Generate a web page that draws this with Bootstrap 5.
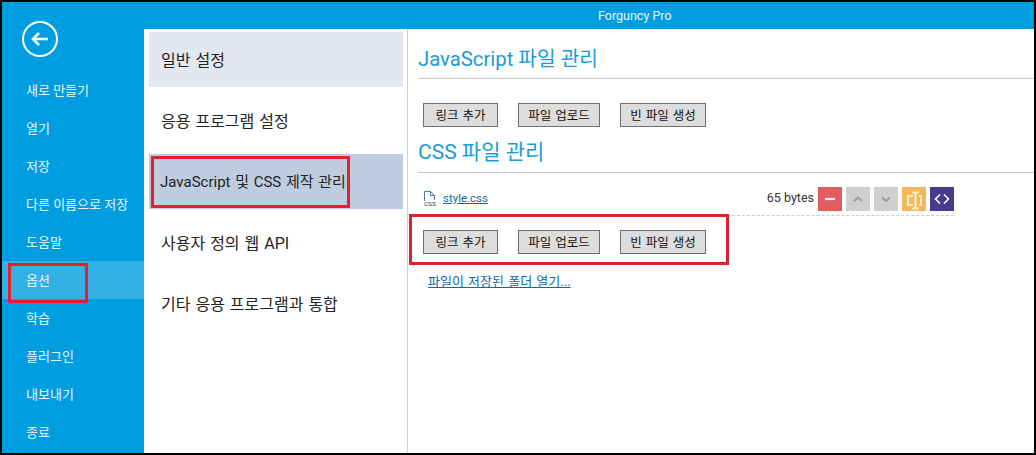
<!DOCTYPE html>
<html lang="ko">
<head>
<meta charset="utf-8">
<title>Forguncy Pro</title>
<link href="https://cdn.jsdelivr.net/npm/bootstrap@5.3.0/dist/css/bootstrap.min.css" rel="stylesheet">
<style>
html,body{margin:0;height:455px;overflow:hidden;background:#000}
body{font-family:Roboto,"Noto Sans CJK KR",sans-serif;color:#222}
.shell{position:relative;width:1036px;height:455px;border:2px solid #000;background:#fff}
.side{width:142px;background:#009ee0;color:#fff;flex:none}
.backbtn{width:36px;height:36px;margin:19px 0 14px 20px;border:2px solid #fff;border-radius:50%;background:none;padding:0;display:flex;align-items:center;justify-content:center}
.sideitem{display:block;height:38px;line-height:40px;padding-left:24px;font-size:13px;color:#e8f6fc;text-decoration:none;white-space:nowrap}
.sideitem.on{background:#33b1e6}
.titlebar{height:27px;line-height:27px;background:#009ee0;color:#e8f6fc;font-size:12.5px;padding-left:454px;flex:none}
.mid{width:264px;flex:none;border-right:1px solid #d0d0d0;padding:3px 4px 0 5px}
.miditem{display:flex;align-items:center;height:55px;padding:2px 0 0 12px;font-size:16px;color:#222;margin-bottom:6px;text-decoration:none;white-space:nowrap;word-spacing:1px}
.miditem.first{background:#e3e8f0}
.miditem.sel{background:#bfcce0;padding-left:11px;font-size:15px}
.pane{padding:0 0 0 10px;min-width:0}
.hd{line-height:28px;color:#1a9bd7;border-bottom:1px solid #c8c8c8;margin:0;font-weight:400}
.hd1{height:50px;padding-top:16px;font-size:20.300px}
.hd2{height:46px;padding-top:11px;font-size:21px}
.btnrow{display:flex;gap:20px;padding-left:5px}
.btnrow1{margin-top:24px}
.btnrow2{margin-top:14px}
.flatbtn{height:24px;padding:0;border:1px solid #707070;border-radius:0;background:#dddddd;color:#111;font-size:12.5px;line-height:21px;text-align:center;word-spacing:1px}
.w1{width:75px}.w2{width:82px}.w3{width:86px}
.filerow{width:531px;margin-left:5px;height:43px;padding-top:9px;border-bottom:1px dashed #ccc;display:flex;align-items:center;font-size:12.5px}
.filelink{color:#0d6aa8;text-decoration:underline;margin-left:4px;font-size:11.500px}
.size{margin-left:auto;margin-right:4px;color:#333}
.act{width:24px;height:24px;margin-left:4px;display:flex;align-items:center;justify-content:center;flex:none}
.act.first{margin-left:0}
.redact{background:#e05c5f}.grayact{background:#cfcfcf}.ambact{background:#f5b75b}.purpact{background:#4a3a8c}
.folderlink{display:block;margin:20px 0 0 10px;font-size:13px;color:#0d6aa8;text-decoration:underline;word-spacing:1px;line-height:16px}
.redbox{position:absolute;border:3px solid #e0222e;pointer-events:none}
.r1{left:149px;top:154px;width:199px;height:52px}
.r2{left:6px;top:261px;width:80px;height:40px}
.r3{left:407px;top:212px;width:320px;height:51px}
</style>
</head>
<body>
<div class="shell d-flex">
  <nav class="side d-flex flex-column">
    <button class="backbtn" aria-label="back"><svg width="18" height="14" viewBox="0 0 18 14"><path d="M8 1 2 7l6 6M3 7h14" fill="none" stroke="#fff" stroke-width="2.600"/></svg></button>
    <a class="sideitem" href="#">새로 만들기</a>
    <a class="sideitem" href="#">열기</a>
    <a class="sideitem" href="#">저장</a>
    <a class="sideitem" href="#">다른 이름으로 저장</a>
    <a class="sideitem" href="#">도움말</a>
    <a class="sideitem on" href="#">옵션</a>
    <a class="sideitem" href="#">학습</a>
    <a class="sideitem" href="#">플러그인</a>
    <a class="sideitem" href="#">내보내기</a>
    <a class="sideitem" href="#">종료</a>
  </nav>
  <div class="flex-grow-1 d-flex flex-column" style="min-width:0">
    <div class="titlebar">Forguncy Pro</div>
    <div class="d-flex flex-grow-1">
      <div class="mid">
        <a class="miditem first" href="#">일반 설정</a>
        <a class="miditem" href="#">응용 프로그램 설정</a>
        <a class="miditem sel" href="#">JavaScript 및 CSS 제작 관리</a>
        <a class="miditem" href="#">사용자 정의 웹 API</a>
        <a class="miditem" href="#">기타 응용 프로그램과 통합</a>
      </div>
      <div class="pane flex-grow-1">
        <h2 class="hd hd1">JavaScript 파일 관리</h2>
        <div class="btnrow btnrow1">
          <button class="flatbtn w1">링크 추가</button>
          <button class="flatbtn w2">파일 업로드</button>
          <button class="flatbtn w3">빈 파일 생성</button>
        </div>
        <h2 class="hd hd2">CSS 파일 관리</h2>
        <div class="filerow">
          <svg width="16" height="17" viewBox="0 0 16 17"><path d="M1.500 11V1.500h6l4 4v4.500M7.500 1.500v4h4" fill="none" stroke="#4a78a8"/><text x="1" y="16" font-size="8" fill="#2f5f90" font-family="Liberation Sans,sans-serif">css</text></svg>
          <a class="filelink" href="#">style.css</a>
          <span class="size">65 bytes</span>
          <span class="act first redact"><svg width="12" height="12" viewBox="0 0 12 12"><path d="M1 6h10" stroke="#fff" stroke-width="2.200"/></svg></span>
          <span class="act grayact"><svg width="12" height="12" viewBox="0 0 12 12"><path d="M2 8l4-3.500 4 3.500" fill="none" stroke="#9a9a9a" stroke-width="2"/></svg></span>
          <span class="act grayact"><svg width="12" height="12" viewBox="0 0 12 12"><path d="M2 4.500 6 8l4-3.500" fill="none" stroke="#9a9a9a" stroke-width="2"/></svg></span>
          <span class="act ambact"><svg width="24" height="24" viewBox="0 0 24 24"><path d="M11 9H6v9h5M17 9h2v9h-2M10 5.500h7M10 21.500h7M13.500 5.500v16" fill="none" stroke="#fdf0c8" stroke-width="2"/></svg></span>
          <span class="act purpact"><svg width="16" height="12" viewBox="0 0 16 12"><path d="M6 1.500 1.500 6 6 10.500M10 1.500 14.500 6 10 10.500" fill="none" stroke="#fff" stroke-width="1.600"/></svg></span>
        </div>
        <div class="btnrow btnrow2">
          <button class="flatbtn w1">링크 추가</button>
          <button class="flatbtn w2">파일 업로드</button>
          <button class="flatbtn w3">빈 파일 생성</button>
        </div>
        <a class="folderlink" href="#">파일이 저장된 폴더 열기...</a>
      </div>
    </div>
  </div>
  <div class="redbox r1"></div>
  <div class="redbox r2"></div>
  <div class="redbox r3"></div>
</div>
</body>
</html>
